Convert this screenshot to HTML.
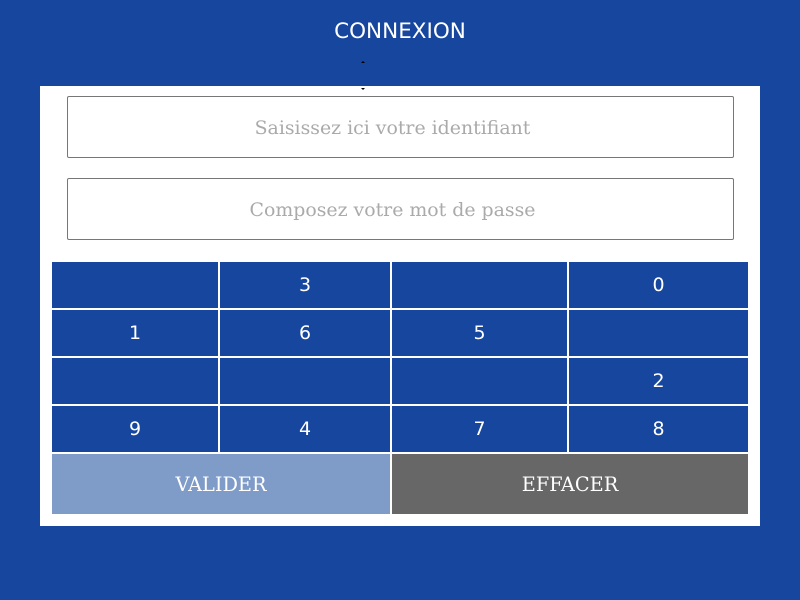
<!DOCTYPE html>
<html><head><style>
body{margin:0;width:800px;height:600px;background:#17469e;position:relative;overflow:hidden;font-family:"DejaVu Sans",sans-serif}
.a{position:absolute}
.t{left:0;width:800px;top:19px;text-align:center;color:#fff;font-size:21.5px}
.p{left:40px;top:86px;width:720px;height:440px;background:#fff}
.in{left:67px;width:649px;padding-right:16px;height:60px;border:1px solid #777;border-radius:2px;background:#fff;color:#aaa;font-family:"DejaVu Serif",serif;font-size:18.9px;text-align:center;line-height:62px}
.c{background:#17469e;color:#fff;font-size:19px;text-align:center;line-height:46px;height:46px}
.b{top:454px;height:60px;line-height:61px;color:#fff;font-family:"DejaVu Serif",serif;font-size:19.3px;text-align:center}
</style></head><body>
<div class="a t">CONNEXION</div>
<div class="a" style="left:361px;top:61px;width:0;height:0;border-left:2px solid transparent;border-right:2px solid transparent;border-bottom:2px solid #000"></div>
<div class="a p"></div>
<div class="a" style="left:361px;top:88px;width:0;height:0;border-left:2px solid transparent;border-right:2px solid transparent;border-top:2px solid #000"></div>
<div class="a in" style="top:96px">Saisissez ici votre identifiant</div>
<div class="a in" style="top:178px">Composez votre mot de passe</div>

<div class="a c" style="left:52px;top:262px;width:166px"></div>
<div class="a c" style="left:220px;top:262px;width:170px">3</div>
<div class="a c" style="left:392px;top:262px;width:175px"></div>
<div class="a c" style="left:569px;top:262px;width:179px">0</div>

<div class="a c" style="left:52px;top:310px;width:166px">1</div>
<div class="a c" style="left:220px;top:310px;width:170px">6</div>
<div class="a c" style="left:392px;top:310px;width:175px">5</div>
<div class="a c" style="left:569px;top:310px;width:179px"></div>

<div class="a c" style="left:52px;top:358px;width:166px"></div>
<div class="a c" style="left:220px;top:358px;width:170px"></div>
<div class="a c" style="left:392px;top:358px;width:175px"></div>
<div class="a c" style="left:569px;top:358px;width:179px">2</div>

<div class="a c" style="left:52px;top:406px;width:166px">9</div>
<div class="a c" style="left:220px;top:406px;width:170px">4</div>
<div class="a c" style="left:392px;top:406px;width:175px">7</div>
<div class="a c" style="left:569px;top:406px;width:179px">8</div>

<div class="a b" style="left:52px;width:338px;background:#7f9bc8">VALIDER</div>
<div class="a b" style="left:392px;width:356px;background:#676767">EFFACER</div>
</body></html>
